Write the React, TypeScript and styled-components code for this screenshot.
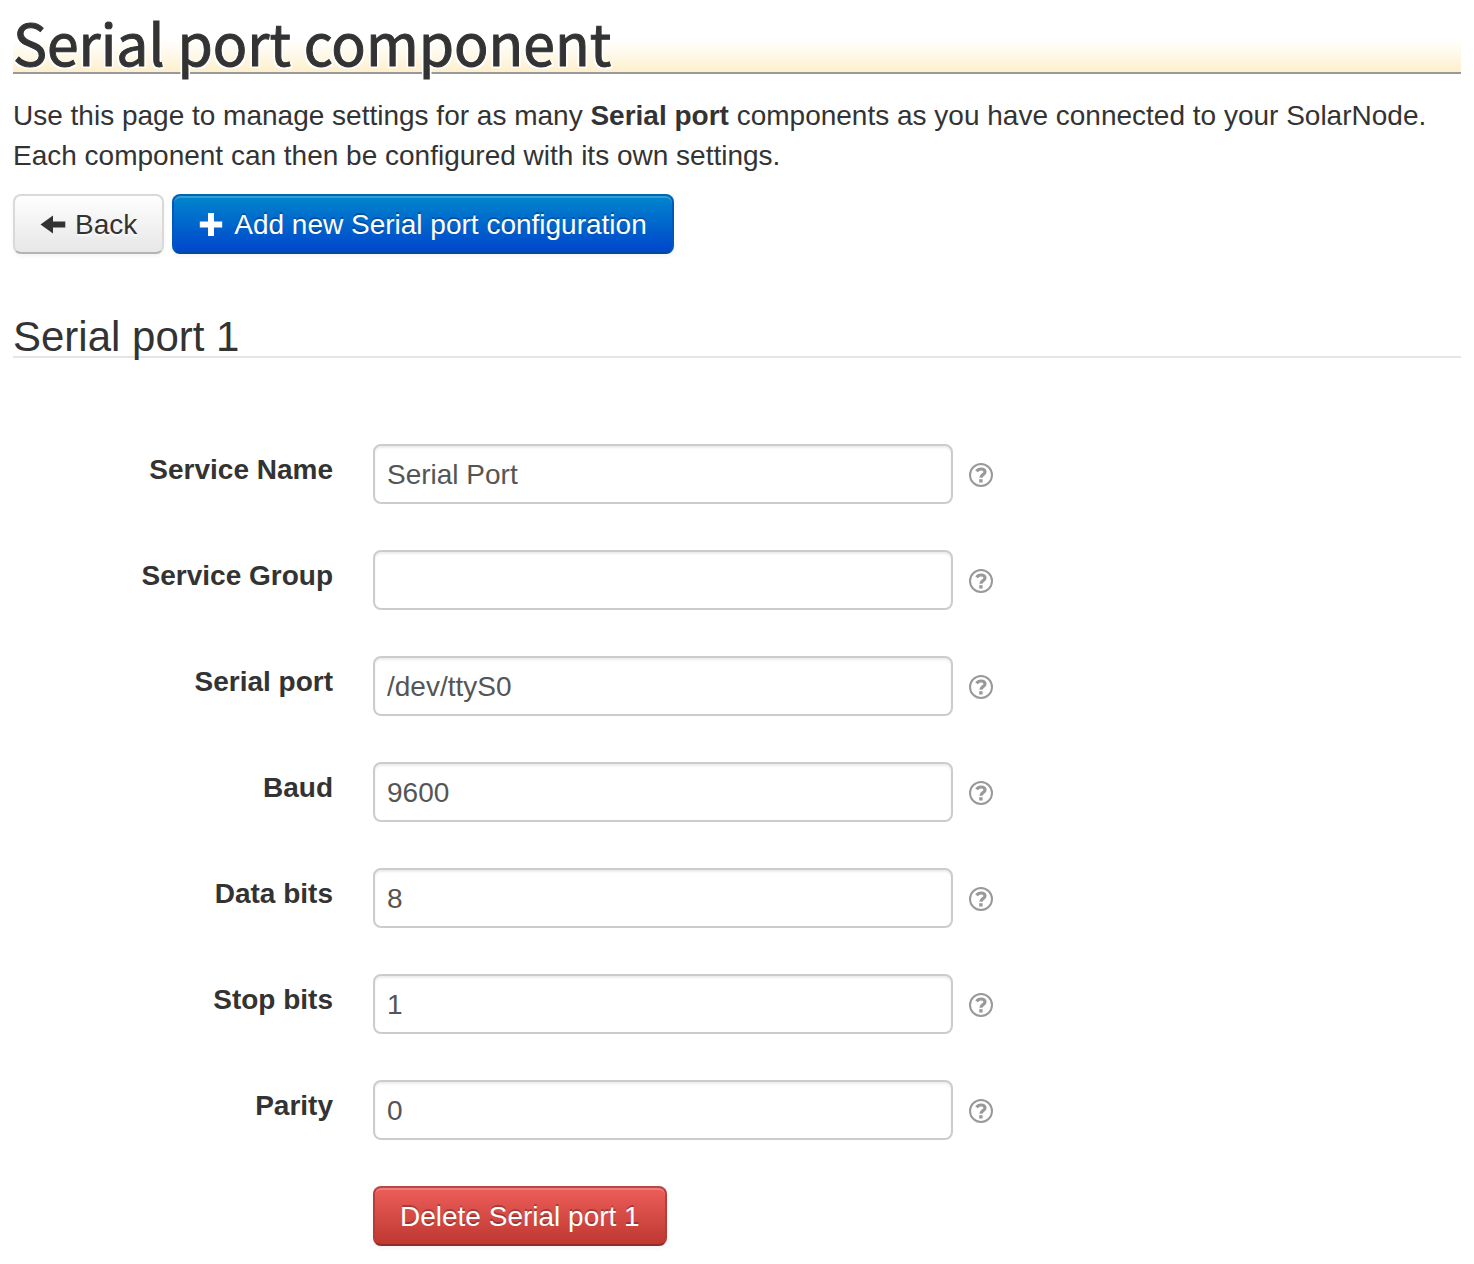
import React from 'react';
import styled, { createGlobalStyle, css } from 'styled-components';

const GlobalStyle = createGlobalStyle`
  *, *::before, *::after {
    box-sizing: border-box;
  }
  body {
    margin: 0;
    background: #fff;
    color: #333;
    font-family: "Liberation Sans", Arial, sans-serif;
    font-size: 28px;
    line-height: 40px;
  }
`;

const Page = styled.main`
  padding: 0 13px 18px;
`;

const Title = styled.h1`
  margin: 0 0 22px;
  padding: 13px 0 3px;
  border-bottom: 2px solid #999;
  background: linear-gradient(to bottom, #fff 56%, #fef0cd 100%);
  font-family: "Noto Sans CJK SC", "Open Sans", sans-serif;
  font-size: 57px;
  font-weight: 400;
  line-height: 56px;
  -webkit-text-stroke: 1px #333;
  text-shadow: -2px 2px 0 #fff, 2px 2px 0 #fff, -2px 0 0 #fff, 2px 0 0 #fff;
`;

const Intro = styled.p`
  margin: 0 0 18px;
`;

const Toolbar = styled.div`
  display: flex;
  flex-wrap: wrap;
  gap: 8px;
`;

type Tone = 'plain' | 'primary' | 'danger';

const tones = {
  plain: css`
    color: #333;
    border-color: #d9d9d9 #d9d9d9 #b3b3b3;
    background-image: linear-gradient(to bottom, #fff, #e6e6e6);
    text-shadow: 0 2px 2px rgba(255, 255, 255, 0.75);
  `,
  primary: css`
    color: #fff;
    border-color: #0067b0 #0059b8 #004a9c;
    background-image: linear-gradient(to bottom, #08c, #04c);
    text-shadow: 0 -2px 0 rgba(0, 0, 0, 0.25);
  `,
  danger: css`
    color: #fff;
    border-color: #b94844 #b53c37 #942a25;
    background-image: linear-gradient(to bottom, #ee5f5b, #bd362f);
    text-shadow: 0 -2px 0 rgba(0, 0, 0, 0.25);
  `,
};

const Button = styled.button<{ $tone: Tone }>`
  display: inline-flex;
  align-items: center;
  gap: 7px;
  padding: 9px 25px 7px;
  border: 2px solid;
  border-radius: 8px;
  background-origin: border-box;
  box-shadow: inset 0 2px 0 rgba(255, 255, 255, 0.2), 0 2px 4px rgba(0, 0, 0, 0.05);
  font: inherit;
  cursor: pointer;
  ${({ $tone }) => tones[$tone]}
`;

const ButtonIcon = styled.svg`
  flex: none;
  width: 28px;
  height: 28px;
  fill: currentColor;
`;

const Settings = styled.form`
  margin-top: 64px;
`;

const SectionTitle = styled.h2`
  margin: 0 0 86px;
  border-bottom: 2px solid #e5e5e5;
  font-size: 42px;
  font-weight: 400;
  line-height: 38px;
`;

const Rows = styled.div`
  display: grid;
  gap: 46px;
`;

const Row = styled.div`
  display: grid;
  grid-template-columns: 320px minmax(0, 1fr);
  column-gap: 40px;
`;

const Label = styled.label`
  padding-top: 6px;
  font-weight: 700;
  text-align: right;
`;

const Controls = styled.div`
  grid-column: 2;
  display: flex;
  align-items: center;
  gap: 16px;
`;

const TextInput = styled.input`
  width: 580px;
  min-width: 0;
  height: 60px;
  padding: 9px 12px 7px;
  border: 2px solid #ccc;
  border-radius: 8px;
  background: #fff;
  box-shadow: inset 0 2px 2px rgba(0, 0, 0, 0.075);
  color: #555;
  font: inherit;
`;

const HelpButton = styled.button`
  flex: none;
  display: flex;
  padding: 2px 0 0;
  border: 0;
  background: none;
  color: #999;
  cursor: pointer;
`;

const ArrowLeftIcon = () => (
  <ButtonIcon viewBox="0 0 28 28" aria-hidden="true">
    <path d="M.5 13.500 13 4.500v6h12.300v6H13v6z" />
  </ButtonIcon>
);

const PlusIcon = () => (
  <ButtonIcon viewBox="0 0 28 28" aria-hidden="true">
    <path d="M9 2h6v8.500h8.200v6H15V25H9v-8.500H.8v-6H9z" />
  </ButtonIcon>
);

const HelpIcon = () => (
  <svg width="24" height="24" viewBox="0 0 24 24" fill="none" stroke="currentColor" aria-hidden="true">
    <circle cx="12" cy="12" r="11" strokeWidth="2" />
    <path d="M7.600 8.300C8.600 6.700 10 6 12 6c2.500 0 4 1.100 4 2.900 0 2.900-4.100 2.700-4.100 5.900" strokeWidth="3.200" />
    <path d="M10.200 16.200h3.400v3.300h-3.400z" fill="currentColor" stroke="none" />
  </svg>
);

const fields = [
  { id: 'service-name', label: 'Service Name', value: 'Serial Port' },
  { id: 'service-group', label: 'Service Group', value: '' },
  { id: 'serial-port', label: 'Serial port', value: '/dev/ttyS0' },
  { id: 'baud', label: 'Baud', value: '9600' },
  { id: 'data-bits', label: 'Data bits', value: '8' },
  { id: 'stop-bits', label: 'Stop bits', value: '1' },
  { id: 'parity', label: 'Parity', value: '0' },
];

export default function App() {
  return (
    <>
      <GlobalStyle />
      <Page>
        <Title>Serial port component</Title>
        <Intro>
          Use this page to manage settings for as many <strong>Serial port</strong> components as you
          have connected to your SolarNode. Each component can then be configured with its own
          settings.
        </Intro>
        <Toolbar>
          <Button type="button" $tone="plain">
            <ArrowLeftIcon />
            Back
          </Button>
          <Button type="button" $tone="primary">
            <PlusIcon />
            Add new Serial port configuration
          </Button>
        </Toolbar>
        <Settings onSubmit={(event) => event.preventDefault()}>
          <SectionTitle>Serial port 1</SectionTitle>
          <Rows>
            {fields.map((field) => (
              <Row key={field.id}>
                <Label htmlFor={field.id}>{field.label}</Label>
                <Controls>
                  <TextInput id={field.id} type="text" defaultValue={field.value} />
                  <HelpButton type="button" aria-label={`Help for ${field.label}`}>
                    <HelpIcon />
                  </HelpButton>
                </Controls>
              </Row>
            ))}
            <Row>
              <Controls>
                <Button type="button" $tone="danger">
                  Delete Serial port 1
                </Button>
              </Controls>
            </Row>
          </Rows>
        </Settings>
      </Page>
    </>
  );
}
